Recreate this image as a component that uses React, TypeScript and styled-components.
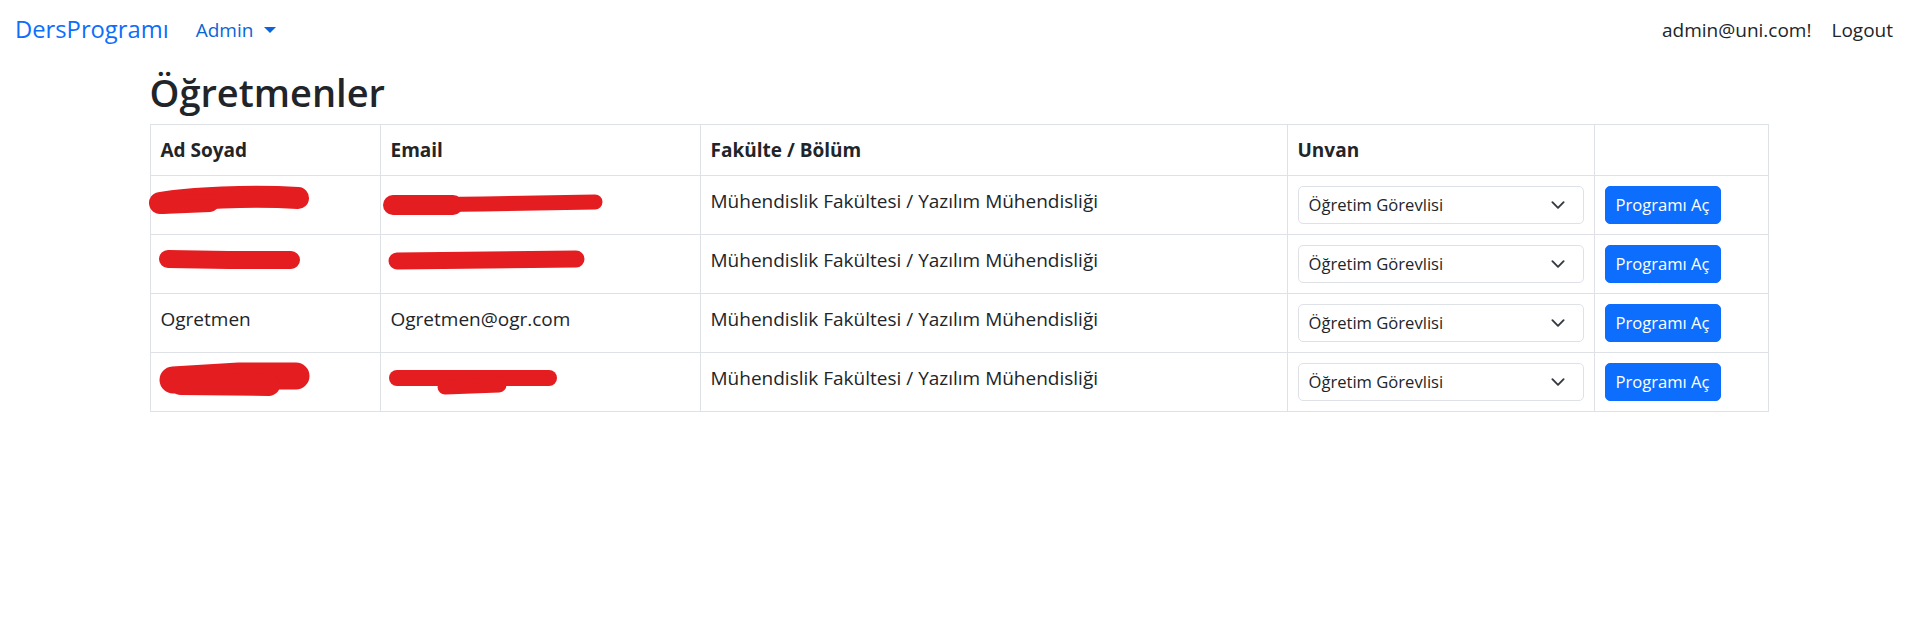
import React from 'react';
import styled, { createGlobalStyle } from 'styled-components';

const GlobalStyle = createGlobalStyle`
  * { box-sizing: border-box; }
  body {
    margin: 0;
    background: #ffffff;
    color: #212529;
    font-family: "Open Sans", "Noto Sans", sans-serif;
  }
`;

const Navbar = styled.nav`
  display: flex;
  align-items: center;
  height: 60px;
  padding: 0 15px;
`;

const Brand = styled.a`
  font-size: 23.75px;
  line-height: 37.5px;
  color: #0d6efd;
  text-decoration: none;
  margin-right: 17px;
  white-space: nowrap;
`;

const NavLink = styled.a<{ $tone?: 'primary' | 'dark' }>`
  display: flex;
  align-items: center;
  padding: 0 10px;
  font-size: 19px;
  line-height: 30px;
  color: ${(p) => (p.$tone === 'primary' ? '#0b64d8' : '#212529')};
  text-decoration: none;
  white-space: nowrap;
`;

const Caret = styled.span`
  display: inline-block;
  margin-left: 11px;
  border-top: 6px solid currentColor;
  border-left: 6px solid transparent;
  border-right: 6px solid transparent;
`;

const RightGroup = styled.div`
  margin-left: auto;
  display: flex;
  align-items: center;
`;

const Main = styled.main`
  max-width: 1619px;
  margin: 0 auto;
  padding-top: 6px;
`;

const Title = styled.h2`
  margin: 0 0 6px;
  font-size: 38px;
  font-weight: 600;
  line-height: 52px;
  color: #212529;
`;

const Table = styled.table`
  width: 100%;
  border-collapse: collapse;
  table-layout: fixed;
  font-size: 19px;
  line-height: 30px;
  color: #212529;
`;

const Col = styled.col<{ $w?: number }>`
  width: ${(p) => (p.$w ? `${p.$w}px` : 'auto')};
`;

const Th = styled.th`
  text-align: left;
  font-weight: 700;
  padding: 10px;
  border: 1px solid #dee2e6;
  vertical-align: top;
`;

const Td = styled.td`
  position: relative;
  padding: 10px;
  border: 1px solid #dee2e6;
  vertical-align: top;
  white-space: nowrap;
`;

const SelectWrap = styled.div`
  position: relative;
`;

const Select = styled.select`
  appearance: none;
  display: block;
  width: 100%;
  height: 38px;
  padding: 0 45px 0 10px;
  font-family: "Open Sans", "Noto Sans", sans-serif;
  font-size: 16.6px;
  line-height: 26px;
  color: #212529;
  background: #ffffff;
  border: 1px solid #dee2e6;
  border-radius: 5px;
`;

const Chevron = styled.svg`
  position: absolute;
  right: 16px;
  top: 50%;
  transform: translateY(-50%);
  pointer-events: none;
`;

const Button = styled.button`
  display: block;
  width: fit-content;
  height: 38px;
  padding: 0 10px;
  font-family: "Open Sans", "Noto Sans", sans-serif;
  font-size: 16.6px;
  line-height: 26px;
  color: #ffffff;
  background: #0d6efd;
  border: 1px solid #0d6efd;
  border-radius: 5px;
  white-space: nowrap;
  cursor: pointer;
`;

const Redaction = styled.svg<{ $x: number; $y: number }>`
  position: absolute;
  left: ${(p) => p.$x}px;
  top: ${(p) => p.$y}px;
  overflow: visible;
  pointer-events: none;
`;

type Stroke = { d: string; sw: number };
type Mark = { x: number; y: number; w: number; h: number; strokes: Stroke[] };

const RED = '#e41d21';

const Scribble: React.FC<{ mark: Mark }> = ({ mark }) => (
  <Redaction $x={mark.x} $y={mark.y} width={mark.w} height={mark.h} viewBox={`0 0 ${mark.w} ${mark.h}`}>
    {mark.strokes.map((s, i) => (
      <path
        key={i}
        d={s.d}
        fill="none"
        stroke={RED}
        strokeWidth={s.sw}
        strokeLinecap="round"
        strokeLinejoin="round"
      />
    ))}
  </Redaction>
);

type Row = {
  name?: string;
  email?: string;
  nameMark?: Mark;
  emailMark?: Mark;
};

const rows: Row[] = [
  {
    nameMark: {
      x: -1, y: 10, w: 159, h: 27,
      strokes: [
        { d: 'M10,17 C40,12 100,9 148,12', sw: 22 },
        { d: 'M12,19 L60,17', sw: 18 },
      ],
    },
    emailMark: {
      x: 2, y: 18, w: 221, h: 22,
      strokes: [
        { d: 'M10,11 L100,10 L212,8', sw: 15 },
        { d: 'M10,11 L70,11', sw: 20 },
      ],
    },
  },
  {
    nameMark: {
      x: 8, y: 13, w: 141, h: 23,
      strokes: [{ d: 'M9,11 L70,12 L132,12', sw: 18 }],
    },
    emailMark: {
      x: 7, y: 16, w: 197, h: 19,
      strokes: [{ d: 'M9,10 L100,9 L188,8', sw: 17 }],
    },
  },
  { name: 'Ogretmen', email: 'Ogretmen@ogr.com' },
  {
    nameMark: {
      x: 8, y: 8, w: 152, h: 34,
      strokes: [
        { d: 'M14,19 L80,15 L137,15', sw: 27 },
        { d: 'M22,23 L110,24', sw: 22 },
      ],
    },
    emailMark: {
      x: 8, y: 16, w: 170, h: 28,
      strokes: [
        { d: 'M8,9 L160,9', sw: 16 },
        { d: 'M56,18 L110,16', sw: 15 },
      ],
    },
  },
];

const DEPT = 'Mühendislik Fakültesi / Yazılım Mühendisliği';

export default function App() {
  return (
    <>
      <GlobalStyle />
      <Navbar>
        <Brand href="#">DersProgramı</Brand>
        <NavLink href="#" $tone="primary">
          Admin
          <Caret />
        </NavLink>
        <RightGroup>
          <NavLink as="span" $tone="dark">admin@uni.com!</NavLink>
          <NavLink href="#" $tone="dark">Logout</NavLink>
        </RightGroup>
      </Navbar>
      <Main>
        <Title>Öğretmenler</Title>
        <Table>
          <colgroup>
            <Col $w={230} />
            <Col $w={320} />
            <Col $w={587} />
            <Col $w={307} />
            <Col />
          </colgroup>
          <thead>
            <tr>
              <Th>Ad Soyad</Th>
              <Th>Email</Th>
              <Th>Fakülte / Bölüm</Th>
              <Th>Unvan</Th>
              <Th></Th>
            </tr>
          </thead>
          <tbody>
            {rows.map((r, i) => (
              <tr key={i}>
                <Td>
                  {r.name}
                  {r.nameMark && <Scribble mark={r.nameMark} />}
                </Td>
                <Td>
                  {r.email}
                  {r.emailMark && <Scribble mark={r.emailMark} />}
                </Td>
                <Td>{DEPT}</Td>
                <Td>
                  <SelectWrap>
                    <Select defaultValue="og">
                      <option value="og">Öğretim Görevlisi</option>
                      <option value="dr">Dr. Öğretim Üyesi</option>
                      <option value="doc">Doçent</option>
                      <option value="prof">Profesör</option>
                    </Select>
                    <Chevron width="20" height="15" viewBox="0 0 16 16">
                      <path
                        d="M2 5l6 6 6-6"
                        fill="none"
                        stroke="#343a40"
                        strokeWidth="2"
                        strokeLinecap="round"
                        strokeLinejoin="round"
                      />
                    </Chevron>
                  </SelectWrap>
                </Td>
                <Td>
                  <Button type="button">Programı Aç</Button>
                </Td>
              </tr>
            ))}
          </tbody>
        </Table>
      </Main>
    </>
  );
}
